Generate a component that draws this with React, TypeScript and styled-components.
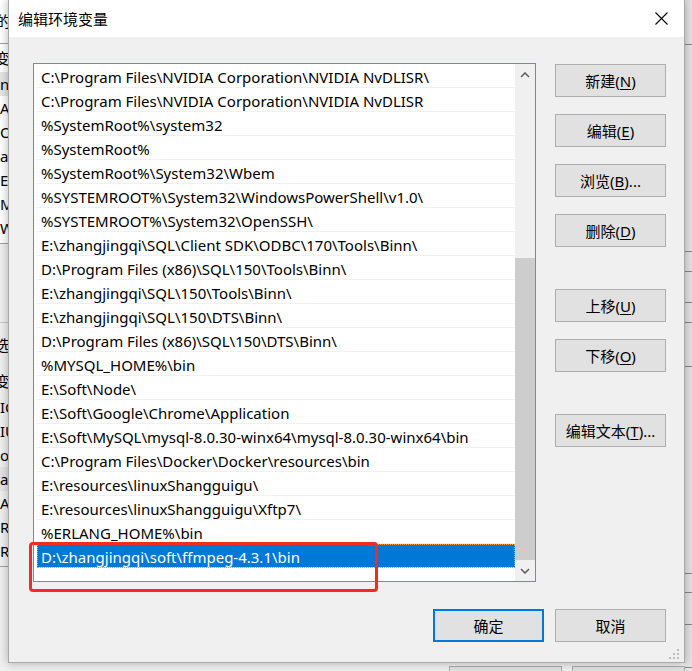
import React from 'react'
import styled, { createGlobalStyle } from 'styled-components'

const GlobalStyle = createGlobalStyle`
  html, body {
    margin: 0;
    padding: 0;
    background: #f0f0f0;
  }
  body {
    font-family: 'Noto Sans', 'Noto Sans CJK SC', sans-serif;
    font-size: 15px;
    color: #000;
  }
`

const Desktop = styled.div`
  position: relative;
  width: 692px;
  height: 671px;
  overflow: hidden;
  background: #f0f0f0;
`

/* ---- window behind the dialog ---- */

const BackWindow = styled.div`
  display: flex;
  height: 100%;
`

const BackLeft = styled.div`
  width: 360px;
  display: flex;
  flex-direction: column;
`

const BackTitle = styled.div`
  height: 43px;
  line-height: 43px;
  background: #fff;
  border-bottom: 1px solid #a0a0a0;
  white-space: nowrap;
  text-indent: -4px;
`

const BackSection = styled.div<{ $bg: string }>`
  display: flex;
  flex-direction: column;
  background: ${({ $bg }) => $bg};
  border-bottom: 1px solid #a0a0a0;
  padding-bottom: 3px;
`

const BackLabel = styled.div<{ $h: number }>`
  height: ${({ $h }) => $h}px;
  line-height: ${({ $h }) => $h}px;
  white-space: nowrap;
  text-indent: -5px;
`

const BackRow = styled.div<{ $sel?: boolean }>`
  height: 24px;
  line-height: 24px;
  white-space: nowrap;
  background: ${({ $sel }) => ($sel ? '#e5e5e5' : 'transparent')};
`

const BackGap = styled.div<{ $h: number }>`
  height: ${({ $h }) => $h}px;
  border-bottom: 1px solid #c8c8c8;
`

const BackMid = styled.div`
  flex: 1;
  display: flex;
  align-items: flex-end;
  gap: 10px;
  padding-left: 112px;
  background: #f0f0f0;
`

const BackButton = styled.div`
  width: 111px;
  height: 4px;
  flex-shrink: 0;
  background: #e1e1e1;
  border: 1px solid #adadad;
  border-bottom: none;
`

const BackRight = styled.div`
  width: 8px;
  display: flex;
  flex-direction: column;
  background: #e4e4e4;
`

const BackStripe = styled.div<{ $h: number }>`
  height: ${({ $h }) => $h}px;
  border-bottom: 1px solid #8a8a8a;
  flex-shrink: 0;
`

/* ---- dialog ---- */

const Dialog = styled.div`
  position: absolute;
  left: 8px;
  top: -1px;
  width: 677px;
  box-sizing: border-box;
  display: flex;
  flex-direction: column;
  background: #f0f0f0;
  border: 1px solid #a9a9a9;
  box-shadow: 0 0 9px rgba(0, 0, 0, 0.3);
`

const TitleBar = styled.div`
  height: 37px;
  display: flex;
  align-items: center;
  justify-content: space-between;
  background: #fff;
  padding-left: 9px;
`

const TitleText = styled.span`
  font-size: 15px;
  font-family: 'Noto Sans CJK SC', sans-serif;
`

const CloseButton = styled.div`
  width: 46px;
  height: 37px;
  display: flex;
  align-items: center;
  justify-content: center;
`

const Body = styled.div`
  display: flex;
  flex-direction: column;
  padding: 26px 18px 20px 24px;
`

const Content = styled.div`
  display: flex;
  gap: 19px;
`

const ListBox = styled.div`
  width: 503px;
  height: 519px;
  box-sizing: border-box;
  border: 1px solid #828790;
  background: #fff;
  display: flex;
`

const Items = styled.div`
  flex: 1;
  display: flex;
  flex-direction: column;
  padding-left: 3px;
  overflow: hidden;
`

const Item = styled.div<{ $selected?: boolean }>`
  height: 24px;
  box-sizing: border-box;
  padding: 3px 0 0 4px;
  line-height: 20px;
  white-space: nowrap;
  border-bottom: 1px solid #f0f0f0;
  color: ${({ $selected }) => ($selected ? '#fff' : '#000')};
  background: ${({ $selected }) => ($selected ? '#0078d7' : 'transparent')};
  outline: ${({ $selected }) => ($selected ? '1px dotted #e8a040' : 'none')};
  outline-offset: -1px;
`

const ScrollBar = styled.div`
  width: 20px;
  display: flex;
  flex-direction: column;
  background: #f0f0f0;
`

const ScrollArrow = styled.div`
  height: 21px;
  display: flex;
  align-items: center;
  justify-content: center;
`

const ScrollTrack = styled.div`
  flex: 1;
  display: flex;
  flex-direction: column;
  justify-content: flex-end;
`

const ScrollThumb = styled.div<{ $h: number }>`
  height: ${({ $h }) => $h}px;
  background: #cdcdcd;
`

const ButtonColumn = styled.div`
  width: 111px;
  display: flex;
  flex-direction: column;
  gap: 17px;
  padding-top: 1px;
`

const Button = styled.button<{ $primary?: boolean; $groupGap?: boolean }>`
  width: 111px;
  height: 33px;
  box-sizing: border-box;
  margin: ${({ $groupGap }) => ($groupGap ? '25px 0 0' : '0')};
  padding: 0;
  background: #e1e1e1;
  border: ${({ $primary }) => ($primary ? '2px solid #0078d7' : '1px solid #adadad')};
  font-family: 'Noto Sans', 'Noto Sans CJK SC', sans-serif;
  font-size: 15px;
  color: #000;
  white-space: nowrap;

  u {
    text-decoration-thickness: 1px;
    text-underline-offset: 2px;
  }
`

const Footer = styled.div`
  display: flex;
  justify-content: flex-end;
  gap: 11px;
  margin-top: 27px;
`

const Grip = styled.svg`
  position: absolute;
  right: 3px;
  bottom: 1px;
`

const Annotation = styled.div`
  position: absolute;
  left: 29px;
  top: 542px;
  width: 349px;
  height: 50px;
  box-sizing: border-box;
  border: 3px solid #f52a22;
  border-radius: 4px;
`

const paths = [
  'C:\\Program Files\\NVIDIA Corporation\\NVIDIA NvDLISR\\',
  'C:\\Program Files\\NVIDIA Corporation\\NVIDIA NvDLISR',
  '%SystemRoot%\\system32',
  '%SystemRoot%',
  '%SystemRoot%\\System32\\Wbem',
  '%SYSTEMROOT%\\System32\\WindowsPowerShell\\v1.0\\',
  '%SYSTEMROOT%\\System32\\OpenSSH\\',
  'E:\\zhangjingqi\\SQL\\Client SDK\\ODBC\\170\\Tools\\Binn\\',
  'D:\\Program Files (x86)\\SQL\\150\\Tools\\Binn\\',
  'E:\\zhangjingqi\\SQL\\150\\Tools\\Binn\\',
  'E:\\zhangjingqi\\SQL\\150\\DTS\\Binn\\',
  'D:\\Program Files (x86)\\SQL\\150\\DTS\\Binn\\',
  '%MYSQL_HOME%\\bin',
  'E:\\Soft\\Node\\',
  'E:\\Soft\\Google\\Chrome\\Application',
  'E:\\Soft\\MySQL\\mysql-8.0.30-winx64\\mysql-8.0.30-winx64\\bin',
  'C:\\Program Files\\Docker\\Docker\\resources\\bin',
  'E:\\resources\\linuxShangguigu\\',
  'E:\\resources\\linuxShangguigu\\Xftp7\\',
  '%ERLANG_HOME%\\bin',
  'D:\\zhangjingqi\\soft\\ffmpeg-4.3.1\\bin'
]

const userRows = ['nt', 'AT', 'Or', 'a', 'E', 'M', 'We']
const sysRows = ['IC', 'IU', 'oS', 'a', 'A', 'R', 'R']
const rightStripes = [44, 206, 19, 30, 19, 43, 206, 18, 31, 42]

function Chevron({ down }: { down?: boolean }) {
  return (
    <svg width="10" height="6" viewBox="0 0 10 6">
      <polyline
        points={down ? '1,1 5,5 9,1' : '1,5 5,1 9,5'}
        fill="none"
        stroke="#606060"
        strokeWidth="1.6"
      />
    </svg>
  )
}

export default function App() {
  const selected = paths.length - 1

  return (
    <Desktop>
      <GlobalStyle />
      <BackWindow>
        <BackLeft>
          <BackTitle>的设置</BackTitle>
          <BackSection $bg="#fff">
            <BackLabel $h={28}>变量</BackLabel>
            {userRows.map((r, i) => (
              <BackRow key={i} $sel={i === 0}>
                {r}
              </BackRow>
            ))}
          </BackSection>
          <BackGap $h={78} />
          <BackLabel $h={44}>选项</BackLabel>
          <BackSection $bg="#f0f0f0">
            <BackLabel $h={28}>变量</BackLabel>
            {sysRows.map((r, i) => (
              <BackRow key={i} $sel={i === 3}>
                {r}
              </BackRow>
            ))}
          </BackSection>
        </BackLeft>
        <BackMid>
          <BackButton />
          <BackButton />
        </BackMid>
        <BackRight>
          {rightStripes.map((h, i) => (
            <BackStripe key={i} $h={h} />
          ))}
        </BackRight>
      </BackWindow>

      <Dialog>
        <TitleBar>
          <TitleText>编辑环境变量</TitleText>
          <CloseButton>
            <svg width="13" height="13" viewBox="0 0 13 13">
              <path d="M0.5 0.5 L12.5 12.5 M12.5 0.5 L0.5 12.5" stroke="#000" strokeWidth="1.1" />
            </svg>
          </CloseButton>
        </TitleBar>
        <Body>
          <Content>
            <ListBox>
              <Items>
                {paths.map((p, i) => (
                  <Item key={i} $selected={i === selected}>
                    {p}
                  </Item>
                ))}
              </Items>
              <ScrollBar>
                <ScrollArrow>
                  <Chevron />
                </ScrollArrow>
                <ScrollTrack>
                  <ScrollThumb $h={302} />
                </ScrollTrack>
                <ScrollArrow>
                  <Chevron down />
                </ScrollArrow>
              </ScrollBar>
            </ListBox>
            <ButtonColumn>
              <Button>
                新建(<u>N</u>)
              </Button>
              <Button>
                编辑(<u>E</u>)
              </Button>
              <Button>
                浏览(<u>B</u>)...
              </Button>
              <Button>
                删除(<u>D</u>)
              </Button>
              <Button $groupGap>
                上移(<u>U</u>)
              </Button>
              <Button>
                下移(<u>O</u>)
              </Button>
              <Button $groupGap>
                编辑文本(<u>T</u>)...
              </Button>
            </ButtonColumn>
          </Content>
          <Footer>
            <Button $primary>确定</Button>
            <Button>取消</Button>
          </Footer>
        </Body>
        <Grip width="12" height="12" viewBox="0 0 12 12">
          <g fill="#bdbdbd">
            <rect x="8" y="0" width="2" height="2" />
            <rect x="4" y="4" width="2" height="2" />
            <rect x="8" y="4" width="2" height="2" />
            <rect x="0" y="8" width="2" height="2" />
            <rect x="4" y="8" width="2" height="2" />
            <rect x="8" y="8" width="2" height="2" />
          </g>
        </Grip>
      </Dialog>

      <Annotation />
    </Desktop>
  )
}
